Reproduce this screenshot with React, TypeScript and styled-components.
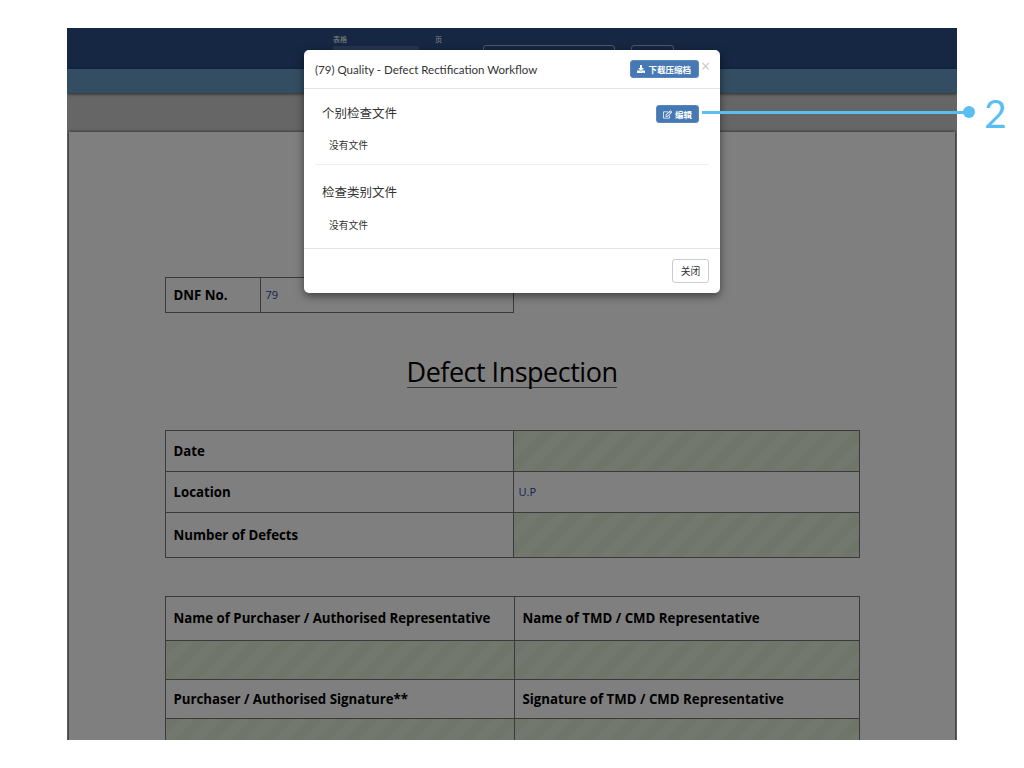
import styled, { createGlobalStyle } from 'styled-components';
import { FaDownload, FaRegEdit } from 'react-icons/fa';

const GlobalStyle = createGlobalStyle`
  html, body {
    margin: 0;
    background: #fff;
  }
  * {
    box-sizing: border-box;
  }
`;

const Page = styled.div`
  position: relative;
  width: 1024px;
  height: 768px;
  padding: 28px 67px;
  overflow: hidden;
  font-family: 'Open Sans', 'Noto Sans CJK SC', sans-serif;
`;

const Frame = styled.div`
  position: relative;
  display: flex;
  flex-direction: column;
  width: 890px;
  height: 712px;
  overflow: hidden;
  background: #ccc;
`;

const TopBar = styled.div`
  display: flex;
  flex: none;
  height: 41px;
  padding: 7px 0 0 266px;
  background: #2a4e86;
  color: #fff;
`;

const Field = styled.div<{ $width: number }>`
  display: flex;
  flex-direction: column;
  gap: 2px;
  width: ${(p) => p.$width}px;
  font-size: 7px;
  line-height: 9px;
`;

const FakeSelect = styled.div`
  width: 86px;
  height: 20px;
  border-radius: 2px;
  background: #4a6a9a;
`;

const BarButton = styled.div<{ $width: number; $gap: number }>`
  flex: none;
  width: ${(p) => p.$width}px;
  height: 20px;
  margin: 10px ${(p) => p.$gap}px 0 0;
  border: 1px solid #9db3d0;
  border-radius: 3px;
`;

const SubBar = styled.div`
  flex: none;
  height: 24px;
  background: #669ac6;
  box-shadow: 0 1px 3px rgba(0, 0, 0, 0.6);
`;

const GreyBand = styled.div`
  flex: none;
  height: 39px;
`;

const Paper = styled.div`
  flex: 1;
  margin: 0 2px;
  padding: 145px 96px 0;
  background: #fff;
  box-shadow: 0 0 3px rgba(0, 0, 0, 0.7);
`;

const Table = styled.table<{ $width: number }>`
  width: ${(p) => p.$width}px;
  border-collapse: collapse;
  table-layout: fixed;
`;

const Cell = styled.td<{ $height: number; $width?: number; $hatched?: boolean }>`
  height: ${(p) => p.$height}px;
  width: ${(p) => (p.$width ? `${p.$width}px` : 'auto')};
  padding: 0 7px 1px 7.5px;
  border: 1px solid #747474;
  font-size: 13.25px;
  font-weight: 700;
  white-space: nowrap;
  color: #000;
  background: ${(p) =>
    p.$hatched
      ? 'repeating-linear-gradient(135deg, #deebd3 0 10px, #e6f0dd 10px 20px)'
      : 'transparent'};
`;

const Value = styled.span`
  display: block;
  margin: 0 0 1px -3px;
  font-size: 11px;
  font-weight: 400;
  color: #24479a;
`;

const DocTitle = styled.h1`
  display: table;
  margin: 43px auto 42px;
  border-bottom: 1px solid #777;
  font-size: 27px;
  font-weight: 400;
  line-height: 31px;
  letter-spacing: -0.5px;
  color: #000;
`;

const Spacer = styled.div`
  height: 38px;
`;

const Overlay = styled.div`
  position: absolute;
  inset: 0;
  display: flex;
  justify-content: center;
  padding-top: 22px;
  background: rgba(0, 0, 0, 0.5);
`;

const Modal = styled.div`
  display: flex;
  flex-direction: column;
  width: 416px;
  height: 243px;
  border-radius: 5px;
  background: #fff;
  box-shadow: 0 3px 9px rgba(0, 0, 0, 0.5);
  color: #333;
`;

const ModalHeader = styled.div`
  display: flex;
  align-items: center;
  flex: none;
  height: 39px;
  padding: 0 8px 0 11px;
  border-bottom: 1px solid #e5e5e5;
`;

const ModalTitle = styled.div`
  flex: 1;
  font-family: Lato, 'Noto Sans CJK SC', sans-serif;
  font-size: 11.5px;
  color: #333;
`;

const PrimaryButton = styled.div`
  display: inline-flex;
  align-items: center;
  justify-content: center;
  gap: 3px;
  height: 18px;
  padding: 0 7px 0 6.5px;
  border: 1px solid #5a88bd;
  border-radius: 3px;
  background: #4679b4;
  color: #fff;
  font-size: 8.5px;
  font-weight: 700;
  white-space: nowrap;
`;

const EditButton = styled(PrimaryButton)`
  margin-top: 4px;
  padding: 0 6px;
`;

const CloseX = styled.div`
  width: 13px;
  margin-top: -5px;
  text-align: center;
  font-size: 16px;
  line-height: 13px;
  color: #c8c8c8;
`;

const Section = styled.div<{ $top: number; $divider?: boolean }>`
  display: flex;
  flex-direction: column;
  flex: none;
  height: 76px;
  margin: 0 11px;
  padding: ${(p) => p.$top}px 10px 0 7px;
  border-bottom: ${(p) => (p.$divider ? '1px solid #eee' : 'none')};
`;

const SectionHead = styled.div`
  display: flex;
  align-items: center;
  justify-content: space-between;
  height: 18px;
`;

const SectionTitle = styled.div`
  font-size: 12.5px;
  color: #333;
`;

const EmptyNote = styled.div<{ $top: number }>`
  margin: ${(p) => p.$top}px 0 0 7px;
  font-size: 9.75px;
  line-height: 14px;
  color: #333;
`;

const ModalFooter = styled.div`
  display: flex;
  align-items: center;
  justify-content: flex-end;
  flex: none;
  height: 45px;
  margin-top: auto;
  padding-right: 11px;
  border-top: 1px solid #e5e5e5;
`;

const DefaultButton = styled.div`
  display: flex;
  align-items: center;
  justify-content: center;
  width: 37px;
  height: 24px;
  border: 1px solid #ccc;
  border-radius: 3px;
  font-size: 9.75px;
  color: #333;
`;

const Callout = styled.div`
  position: absolute;
  left: 702px;
  top: 98px;
  display: flex;
  align-items: center;
  height: 30px;
  color: #5bbef2;
`;

const CalloutLine = styled.div`
  width: 262px;
  height: 3px;
  margin-top: -2px;
  background: #5bbef2;
`;

const CalloutDot = styled.div`
  width: 12px;
  height: 12px;
  margin: -2px 0 0 -1px;
  border-radius: 50%;
  background: #5bbef2;
`;

const CalloutNumber = styled.div`
  margin-left: 9px;
  font-family: Lato, sans-serif;
  font-size: 39px;
  font-weight: 400;
  line-height: 30px;
`;

export default function App() {
  return (
    <Page>
      <GlobalStyle />
      <Frame>
        <TopBar>
          <Field $width={102}>
            表格
            <FakeSelect />
          </Field>
          <Field $width={48}>页</Field>
          <BarButton $width={132} $gap={16} />
          <BarButton $width={43} $gap={0} />
        </TopBar>
        <SubBar />
        <GreyBand />
        <Paper>
          <Table $width={349}>
            <tbody>
              <tr>
                <Cell $height={35} $width={95}>DNF No.</Cell>
                <Cell $height={35}><Value>79</Value></Cell>
              </tr>
            </tbody>
          </Table>
          <DocTitle>Defect Inspection</DocTitle>
          <Table $width={695}>
            <tbody>
              <tr>
                <Cell $height={41} $width={348}>Date</Cell>
                <Cell $height={41} $hatched />
              </tr>
              <tr>
                <Cell $height={41}>Location</Cell>
                <Cell $height={41}><Value>U.P</Value></Cell>
              </tr>
              <tr>
                <Cell $height={45}>Number of Defects</Cell>
                <Cell $height={45} $hatched />
              </tr>
            </tbody>
          </Table>
          <Spacer />
          <Table $width={695}>
            <tbody>
              <tr>
                <Cell $height={44} $width={349}>Name of Purchaser / Authorised Representative</Cell>
                <Cell $height={44}>Name of TMD / CMD Representative</Cell>
              </tr>
              <tr>
                <Cell $height={39} $hatched />
                <Cell $height={39} $hatched />
              </tr>
              <tr>
                <Cell $height={39}>Purchaser / Authorised Signature**</Cell>
                <Cell $height={39}>Signature of TMD / CMD Representative</Cell>
              </tr>
              <tr>
                <Cell $height={60} $hatched />
                <Cell $height={60} $hatched />
              </tr>
            </tbody>
          </Table>
        </Paper>
        <Overlay>
          <Modal>
            <ModalHeader>
              <ModalTitle>(79) Quality - Defect Rectification Workflow</ModalTitle>
              <PrimaryButton>
                <FaDownload size={8} />
                下载压缩档
              </PrimaryButton>
              <CloseX>×</CloseX>
            </ModalHeader>
            <Section $top={14} $divider>
              <SectionHead>
                <SectionTitle>个别检查文件</SectionTitle>
                <EditButton>
                  <FaRegEdit size={9} />
                  编辑
                </EditButton>
              </SectionHead>
              <EmptyNote $top={18}>没有文件</EmptyNote>
            </Section>
            <Section $top={17}>
              <SectionHead>
                <SectionTitle>检查类别文件</SectionTitle>
              </SectionHead>
              <EmptyNote $top={19}>没有文件</EmptyNote>
            </Section>
            <ModalFooter>
              <DefaultButton>关闭</DefaultButton>
            </ModalFooter>
          </Modal>
        </Overlay>
      </Frame>
      <Callout>
        <CalloutLine />
        <CalloutDot />
        <CalloutNumber>2</CalloutNumber>
      </Callout>
    </Page>
  );
}
